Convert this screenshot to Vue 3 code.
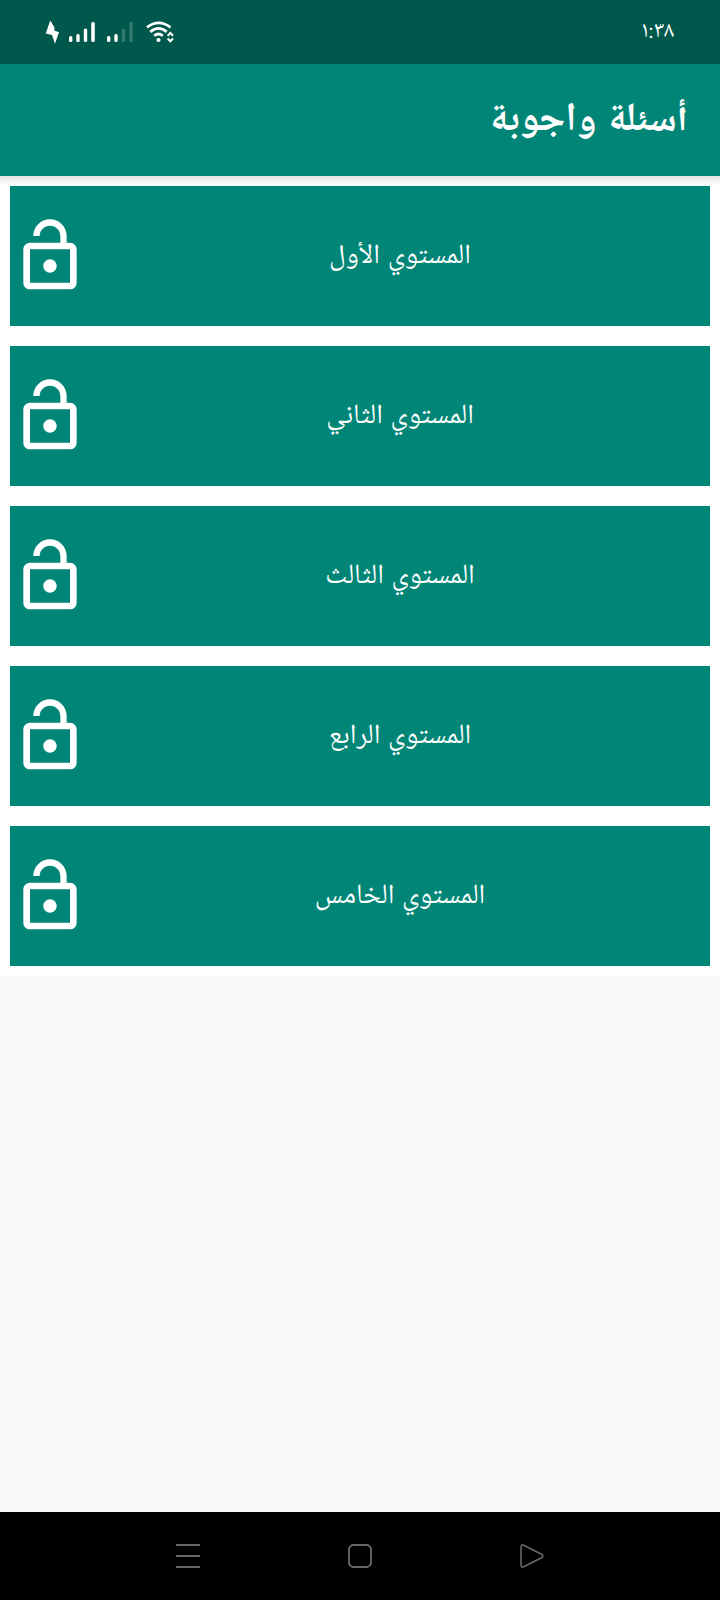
<template>
  <div class="screen" dir="rtl">
    <header class="status-bar">
      <span class="time">١:٣٨</span>
      <svg class="status-icons" width="130" height="26" viewBox="0 0 130 26" fill="#fff">
        <path d="M5.2 1.5 0.8 14.6 7 16 10 24.8 14 13.2 9.3 11.5 9.5 8.5Z" />
        <g>
          <rect x="24" y="17" width="3.4" height="6" rx="1.5" />
          <rect x="31.3" y="15" width="3.4" height="8" rx="1.5" />
          <rect x="38.8" y="9.5" width="3.4" height="13.5" rx="1.5" />
          <rect x="46.2" y="3" width="3.6" height="20" rx="1.5" />
        </g>
        <g>
          <rect x="62" y="17" width="3.4" height="6" rx="1.5" />
          <rect x="69.3" y="15" width="3.4" height="8" rx="1.5" />
          <rect x="76.8" y="9.5" width="3.4" height="13.5" rx="1.5" opacity="0.2" />
          <rect x="84.2" y="3" width="3.6" height="20" rx="1.5" opacity="0.2" />
        </g>
        <g fill="none" stroke="#fff" stroke-width="2.8">
          <path d="M102 8.3Q113.5 -0.5 125.5 8.3" />
          <path d="M105.3 12.8Q113.5 6 121.7 12.8" />
          <path d="M109.2 16.8Q113.5 13.2 117.8 16.8" />
        </g>
        <circle cx="113.5" cy="21" r="2.1" />
        <path d="M122.6 16.8 125.3 14 128 16.8M122.6 19.5 125.3 22.3 128 19.5" fill="none" stroke="#fff" stroke-width="2" />
      </svg>
    </header>

    <div class="app-bar">
      <h1 class="title">أسئلة واجوبة</h1>
    </div>

    <main class="content">
      <ul class="levels">
        <li v-for="level in levels" :key="level" class="level">
          <span class="name">{{ level }}</span>
          <svg class="lock" viewBox="0 0 24 24" fill="#fff">
            <path
              d="M12 17c1.1 0 2-.9 2-2s-.9-2-2-2-2 .9-2 2 .9 2 2 2zm6-9h-1V6c0-2.76-2.24-5-5-5S7 3.24 7 6h1.9c0-1.71 1.39-3.1 3.1-3.1 1.71 0 3.1 1.39 3.1 3.1v2H6c-1.1 0-2 .9-2 2v10c0 1.1.9 2 2 2h12c1.1 0 2-.9 2-2V10c0-1.1-.9-2-2-2zm0 12H6V10h12v10z"
            />
          </svg>
        </li>
      </ul>
    </main>

    <nav class="nav-bar">
      <svg width="24" height="24" viewBox="0 0 24 24">
        <path d="M0 1h24M0 12h24M0 23h24" />
      </svg>
      <svg width="24" height="24" viewBox="0 0 24 24">
        <rect x="0.9" y="0.9" width="22.2" height="22.2" rx="5" />
      </svg>
      <svg width="24" height="24" viewBox="0 0 24 24">
        <path class="thin" d="M1 3v18q0 3 2.8 1.7l17.7-9q2.8-1.7 0-3.4L3.8 1.3Q1 0 1 3z" />
      </svg>
    </nav>
  </div>
</template>

<script setup>
const levels = [
  "المستوي الأول",
  "المستوي الثاني",
  "المستوي الثالث",
  "المستوي الرابع",
  "المستوي الخامس",
];
</script>

<style>
body {
  margin: 0;
}
</style>

<style scoped>
.screen {
  display: flex;
  flex-direction: column;
  height: 1600px;
  background: #fafafa;
  color: #fff;
  font-family: "Noto Naskh Arabic UI", "Noto Naskh Arabic", "DejaVu Sans", sans-serif;
}
.status-bar {
  display: flex;
  justify-content: space-between;
  align-items: center;
  box-sizing: border-box;
  height: 64px;
  padding: 0 46px 0 45px;
  background: #00574b;
}
.time {
  padding-bottom: 1px;
  font-size: 22.8px;
  line-height: 24px;
}
.app-bar {
  display: flex;
  align-items: center;
  box-sizing: border-box;
  height: 112px;
  padding: 2px 32px 0;
  background: #008577;
}
.content {
  flex: 1;
}
.title {
  margin: 0;
  font-size: 40px;
  line-height: 56px;
  font-weight: bold;
  word-spacing: 1.5px;
}
.levels {
  display: flex;
  flex-direction: column;
  gap: 20px;
  margin: 0;
  padding: 10px;
  background: linear-gradient(#e2e2e2, #fff 9px);
  list-style: none;
}
.level {
  display: flex;
  align-items: center;
  height: 140px;
  background: #008577;
}
.name {
  flex: 1;
  text-align: center;
  font-size: 28px;
  line-height: 40px;
  word-spacing: 1.5px;
}
.lock {
  width: 80px;
  height: 80px;
}
.nav-bar {
  display: flex;
  justify-content: space-between;
  align-items: center;
  direction: ltr;
  box-sizing: border-box;
  height: 88px;
  padding: 0 176px;
  background: #000;
}
.nav-bar svg {
  fill: none;
  stroke: #666;
  stroke-width: 2;
}
.nav-bar .thin {
  stroke-width: 1.6;
}
</style>
